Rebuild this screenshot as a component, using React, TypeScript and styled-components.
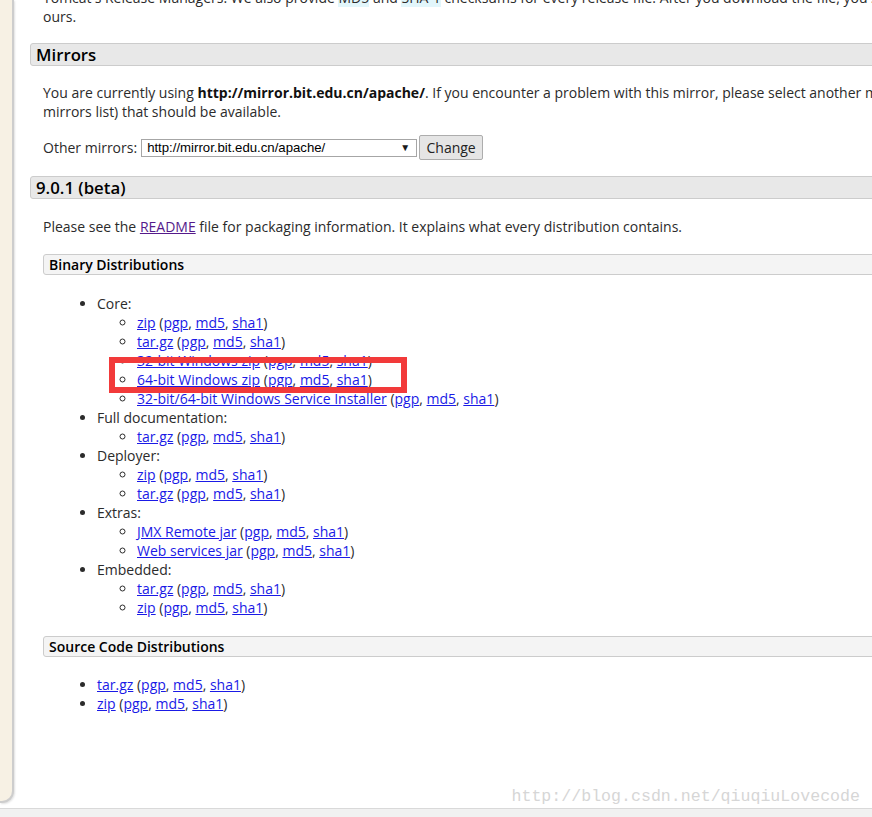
import React from "react";
import styled, { createGlobalStyle } from "styled-components";

const GlobalStyle = createGlobalStyle`
  html, body {
    margin: 0;
    padding: 0;
    background: #ffffff;
  }
  body {
    font-family: "Open Sans", "Liberation Sans", sans-serif;
    overflow: hidden;
  }
`;

type Entry = { name: string; items: string[] };

const binary: Entry[] = [
  {
    name: "Core:",
    items: [
      "zip",
      "tar.gz",
      "32-bit Windows zip",
      "64-bit Windows zip",
      "32-bit/64-bit Windows Service Installer",
    ],
  },
  { name: "Full documentation:", items: ["tar.gz"] },
  { name: "Deployer:", items: ["zip", "tar.gz"] },
  { name: "Extras:", items: ["JMX Remote jar", "Web services jar"] },
  { name: "Embedded:", items: ["tar.gz", "zip"] },
];

const source = ["tar.gz", "zip"];

const Download = ({ name }: { name: string }) => (
  <>
    <Link href="#">{name}</Link> (<Link href="#">pgp</Link>,{" "}
    <Link href="#">md5</Link>, <Link href="#">sha1</Link>)
  </>
);

const App = () => {
  return (
    <>
      <GlobalStyle />
      <Frame>
        <Body>
          <Sidebar />
          <Main>
            <Para $top={-12}>
              Tomcat's Release Managers. We also provide <Code>MD5</Code> and{" "}
              <Code>SHA-1</Code> checksums for every release file. After you
              download the file, you should calculate a checksum for your
              download, and make sure it is the same as
              <br />
              ours.
            </Para>

            <Heading $top={17}>Mirrors</Heading>
            <Para $top={17}>
              You are currently using{" "}
              <strong>http://mirror.bit.edu.cn/apache/</strong>. If you
              encounter a problem with this mirror, please select another
              mirror. If all mirrors are failing, there are backup mirrors (at
              the end of the
              <br />
              mirrors list) that should be available.
            </Para>
            <MirrorRow>
              Other mirrors:
              <FakeSelect>
                <span>http://mirror.bit.edu.cn/apache/</span>
                <Arrow>▼</Arrow>
              </FakeSelect>
              <Button>Change</Button>
            </MirrorRow>

            <Heading $top={16}>9.0.1 (beta)</Heading>
            <Para $top={18}>
              Please see the <Visited href="#">README</Visited> file for
              packaging information. It explains what every distribution
              contains.
            </Para>

            <SubHeading $top={18}>Binary Distributions</SubHeading>
            <List $top={18.5}>
              {binary.map((group) => (
                <li key={group.name}>
                  {group.name}
                  <Nested>
                    {group.items.map((item) => (
                      <Item key={item}>
                        <Download name={item} />
                        {item === "64-bit Windows zip" && <Highlight />}
                      </Item>
                    ))}
                  </Nested>
                </li>
              ))}
            </List>

            <SubHeading $top={19.5}>Source Code Distributions</SubHeading>
            <List $top={17.5}>
              {source.map((item) => (
                <li key={item}>
                  <Download name={item} />
                </li>
              ))}
            </List>
          </Main>
        </Body>
        <Footer />
        <Watermark>http://blog.csdn.net/qiuqiuLovecode</Watermark>
      </Frame>
    </>
  );
};

export default App;

const Frame = styled.div`
  position: relative;
  width: 872px;
  height: 817px;
  overflow: hidden;
  display: flex;
  flex-direction: column;
`;

const Body = styled.div`
  display: flex;
  align-items: flex-start;
  height: 808px;
  flex-shrink: 0;
`;

const Sidebar = styled.aside`
  flex-shrink: 0;
  width: 12px;
  height: 801px;
  background: #f7f1e4;
  border-right: 2px solid #cdcdcd;
  border-bottom: 2px solid #cdcdcd;
  border-bottom-right-radius: 12px;
  box-shadow: 1px 1px 2px rgba(0, 0, 0, 0.12);
`;

const Main = styled.main`
  flex-shrink: 0;
  width: 1100px;
  margin-left: 16px;
  font-size: 14px;
  line-height: 19px;
  color: #2b2b2b;
`;

const Para = styled.p<{ $top: number }>`
  margin: ${(p) => p.$top}px 0 0;
  padding: 0 13px;
  white-space: nowrap;

  strong {
    color: #111111;
    font-weight: 700;
  }
`;

const Code = styled.code`
  font-family: "Open Sans", "Liberation Sans", sans-serif;
  font-size: 14px;
  background: #e2f6fb;
`;

const Heading = styled.h3<{ $top: number }>`
  margin: ${(p) => p.$top}px 0 0;
  padding: 0 5px;
  height: 21px;
  line-height: 21px;
  font-size: 16.8px;
  font-weight: 600;
  color: #000000;
  background: #e8e8e8;
  border: 1px solid #cccccc;
  border-radius: 3px;
`;

const SubHeading = styled.h4<{ $top: number }>`
  margin: ${(p) => p.$top}px 0 0 13px;
  padding: 0 5px;
  height: 19px;
  line-height: 19px;
  font-size: 14px;
  font-weight: 600;
  color: #000000;
  background: #f4f4f4;
  border: 1px solid #cccccc;
  border-radius: 3px;
`;

const MirrorRow = styled.div`
  display: flex;
  align-items: center;
  margin-top: 14px;
  padding: 0 13px;
  height: 25px;
`;

const FakeSelect = styled.div`
  display: flex;
  align-items: center;
  justify-content: space-between;
  box-sizing: border-box;
  width: 276px;
  height: 18px;
  margin-left: 4px;
  padding: 0 6px 0 5px;
  background: #ffffff;
  border: 1px solid #a6a6a6;
  font-family: "Liberation Sans", Arial, sans-serif;
  font-size: 13.2px;
  color: #000000;
`;

const Arrow = styled.span`
  font-size: 10px;
  line-height: 10px;
  color: #1a1a1a;
`;

const Button = styled.button`
  box-sizing: border-box;
  height: 25px;
  width: 64px;
  margin-left: 2px;
  padding: 0;
  background: #e5e5e5;
  border: 1px solid #adadad;
  border-radius: 2px;
  font-family: "Open Sans", "Liberation Sans", sans-serif;
  font-size: 14px;
  color: #222222;
`;

const Link = styled.a`
  color: #1a1ae6;
  text-decoration: underline;
`;

const Visited = styled(Link)`
  color: #551a8b;
`;

const List = styled.ul<{ $top: number }>`
  margin: ${(p) => p.$top}px 0 0;
  padding-left: 67px;
  list-style: disc;
  white-space: nowrap;
`;

const Nested = styled.ul`
  margin: 0;
  padding-left: 40px;
  list-style: circle;
`;

const Item = styled.li`
  position: relative;
`;

const Highlight = styled.span`
  position: absolute;
  left: -28px;
  top: -13px;
  width: 298px;
  height: 36px;
  box-sizing: border-box;
  border: 6px solid #f23a3a;
  pointer-events: none;
`;

const Footer = styled.div`
  flex: 1;
  border-top: 1px solid #d9d9d9;
  background: #f1f1f1;
`;

const Watermark = styled.div`
  position: absolute;
  right: 12px;
  top: 787px;
  font-family: "Liberation Mono", "DejaVu Sans Mono", monospace;
  font-size: 16.6px;
  line-height: 20px;
  color: #d6d6d6;
  pointer-events: none;
`;
